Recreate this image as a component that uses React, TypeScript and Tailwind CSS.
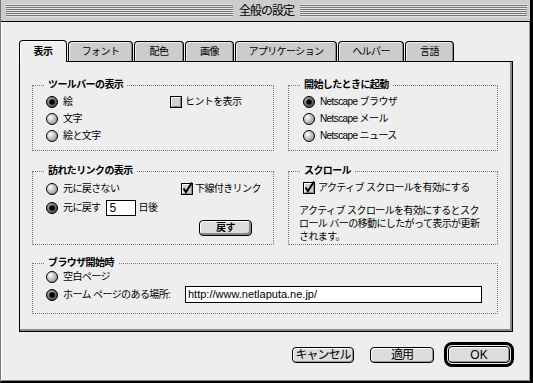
import type { ReactNode } from "react";

function Stripes() {
  return (
    <div className="flex-1 flex flex-col gap-px py-px bg-[#e4e4e4]">
      {[0, 1, 2, 3, 4, 5].map((i) => (
        <div key={i} className="h-px bg-[#777777]" />
      ))}
    </div>
  );
}

function Radio({ on = false }: { on?: boolean }) {
  return (
    <svg width="12" height="12" viewBox="0 0 12 12" className="shrink-0">
      <circle cx="6" cy="6" r="5.5" fill={on ? "url(#radioOn)" : "url(#radioOff)"} stroke="#000" />
      {on && <circle cx="6" cy="6" r="2.8" fill="#000" />}
    </svg>
  );
}

function Check({ on = false }: { on?: boolean }) {
  return (
    <svg width="12" height="12" viewBox="0 0 12 12" className="shrink-0 overflow-visible">
      <rect x="0.5" y="0.5" width="11" height="11" fill="#cfcfcf" stroke="#000" />
      <path d="M1.5 10V1.5H10" stroke="#fff" fill="none" />
      <path d="M2 10.5H10.5V2" stroke="#8a8a8a" fill="none" />
      {on && <path d="M2.5 5.5L5 9L11 -0.5" stroke="#000" strokeWidth="2" fill="none" />}
    </svg>
  );
}

function Group({ title, className = "", children }: { title: string; className?: string; children: ReactNode }) {
  return (
    <fieldset className={`border border-dotted border-[#7a7a7a] min-w-0 ${className}`}>
      <legend className="ml-[11px] px-[4px] font-bold leading-[12px]">{title}</legend>
      {children}
    </fieldset>
  );
}

function Btn({ className = "", children }: { className?: string; children: ReactNode }) {
  return (
    <div
      className={`flex items-center justify-center border border-black rounded-[4px] bg-[#dddddd] shadow-[inset_1px_1px_0_#fff,inset_-1px_-1px_0_#999] ${className}`}
    >
      {children}
    </div>
  );
}

const tabs = [
  { label: "表示", w: "w-[48px]" },
  { label: "フォント", w: "w-[65px]" },
  { label: "配色", w: "w-[50px]" },
  { label: "画像", w: "w-[49px]" },
  { label: "アプリケーション", w: "w-[102px]" },
  { label: "ヘルパー", w: "w-[66px]" },
  { label: "言語", w: "w-[49px]" },
];

export default function App() {
  return (
    <div className="w-[533px] h-[383px] flex flex-col bg-[#eeeeee] border-l border-l-[#777] border-r-[3px] border-r-black border-b-2 border-b-black font-['Liberation_Sans','Noto_Sans_CJK_JP',sans-serif] text-[10px] tracking-[-0.6px] text-black leading-none whitespace-nowrap">
      <svg width="0" height="0" className="block shrink-0">
        <defs>
          <radialGradient id="radioOff" cx="0.35" cy="0.35" r="0.75">
            <stop offset="0" stopColor="#ffffff" />
            <stop offset="1" stopColor="#8a8a8a" />
          </radialGradient>
          <radialGradient id="radioOn" cx="0.35" cy="0.35" r="0.75">
            <stop offset="0" stopColor="#b5b5b5" />
            <stop offset="1" stopColor="#3a3a3a" />
          </radialGradient>
        </defs>
      </svg>

      {/* title bar */}
      <div className="h-[22px] shrink-0 flex items-center pl-[5px] pr-[3px] bg-[#cccccc] border-b border-black">
        <Stripes />
        <span className="px-[6px] text-[12px] tracking-[-1px] leading-[14px]">全般の設定</span>
        <Stripes />
      </div>

      <div className="flex-1 flex flex-col pl-[17px] pt-[18px] border-l border-l-white border-r border-r-[#999] border-b border-b-[#888]">
        {/* tabs */}
        <div className="flex items-end h-[21px] gap-px">
          {tabs.map((t, i) =>
            i === 0 ? (
              <div
                key={t.label}
                className={`${t.w} h-[22px] -mb-px relative z-10 flex items-center justify-center bg-[#eeeeee] border border-b-0 border-black rounded-t-[4px] shadow-[inset_1px_1px_0_#fff] font-bold`}
              >
                {t.label}
              </div>
            ) : (
              <div
                key={t.label}
                className={`${t.w} h-[20px] flex items-center justify-center bg-[#cccccc] border border-b-0 border-black rounded-t-[4px] shadow-[inset_1px_1px_0_#eee,inset_-1px_0_0_#888]`}
              >
                {t.label}
              </div>
            )
          )}
        </div>

        {/* panel */}
        <div className="w-[494px] h-[271px] border border-black shadow-[inset_-2px_-2px_0_#8a8a8a] pt-[17px] pl-[12px]">
          <div className="grid grid-cols-[242px_210px] gap-x-[14px] gap-y-[14px]">
            <Group title="ツールバーの表示">
              <div className="flex pt-[2px] pb-[6px] pl-[13px]">
                <div className="w-[124px] shrink-0 flex flex-col">
                  <div className="h-[17px] flex items-center gap-[5px]"><Radio on />絵</div>
                  <div className="h-[17px] flex items-center gap-[5px]"><Radio />文字</div>
                  <div className="h-[17px] flex items-center gap-[5px]"><Radio />絵と文字</div>
                </div>
                <div className="h-[17px] flex items-center gap-[3px]"><Check />ヒントを表示</div>
              </div>
            </Group>

            <Group title="開始したときに起動">
              <div className="flex flex-col pt-[2px] pl-[14px]">
                <div className="h-[17px] flex items-center gap-[5px]"><Radio on />Netscape ブラウザ</div>
                <div className="h-[17px] flex items-center gap-[5px]"><Radio />Netscape メール</div>
                <div className="h-[17px] flex items-center gap-[5px]"><Radio />Netscape ニュース</div>
              </div>
            </Group>

            <Group title="訪れたリンクの表示">
              <div className="pt-[4px] pl-[13px] pr-[21px] pb-[8px]">
                <div className="h-[16px] flex items-center">
                  <div className="w-[135px] shrink-0 flex items-center gap-[5px]"><Radio />元に戻さない</div>
                  <div className="shrink-0 flex items-center gap-[2px]"><Check on />下線付きリンク</div>
                </div>
                <div className="mt-[3px] h-[16px] flex items-center">
                  <Radio on />
                  <span className="ml-[5px]">元に戻す</span>
                  <div className="ml-[5px] w-[30px] h-[16px] flex items-center pl-[3px] bg-white border border-black text-[12px] tracking-normal">5</div>
                  <span className="ml-[3px]">日後</span>
                </div>
                <div className="mt-[4px] flex justify-end">
                  <Btn className="w-[53px] h-[16px] font-bold shadow-[inset_1px_1px_0_#fff,inset_-2px_-2px_0_#888]">戻す</Btn>
                </div>
              </div>
            </Group>

            <Group title="スクロール">
              <div className="pt-[4px] pl-[10px]">
                <div className="ml-[4px] h-[14px] flex items-center gap-[3px]"><Check on />アクティブ スクロールを有効にする</div>
                <p className="mt-[9px] leading-[13px]">
                  アクティブ スクロールを有効にするとスク
                  <br />
                  ロール バーの移動にしたがって表示が更新
                  <br />
                  されます。
                </p>
              </div>
            </Group>
          </div>

          <Group title="ブラウザ開始時" className="mt-[12px] w-[466px]">
            <div className="pl-[13px] pr-[15px] pb-[10px]">
              <div className="h-[15px] flex items-center gap-[5px]"><Radio />空白ページ</div>
              <div className="mt-[2px] h-[17px] flex items-center">
                <Radio on />
                <span className="ml-[5px]">ホーム ページのある場所:</span>
                <div className="ml-auto w-[297px] h-[17px] flex items-center pl-[2px] bg-white border border-black text-[11px] tracking-normal">
                  http://www.netlaputa.ne.jp/
                </div>
              </div>
            </div>
          </Group>
        </div>

        {/* dialog buttons */}
        <div className="mt-[10px] flex items-center justify-end pr-[15px] text-[12px] tracking-[-1px]">
          <Btn className="w-[62px] h-[16px]">キャンセル</Btn>
          <Btn className="ml-[16px] w-[64px] h-[16px]">適用</Btn>
          <div className="ml-[10px] w-[70px] h-[25px] flex p-px border-[3px] border-black rounded-[8px]">
            <Btn className="flex-1 tracking-normal">OK</Btn>
          </div>
        </div>
      </div>
    </div>
  );
}
